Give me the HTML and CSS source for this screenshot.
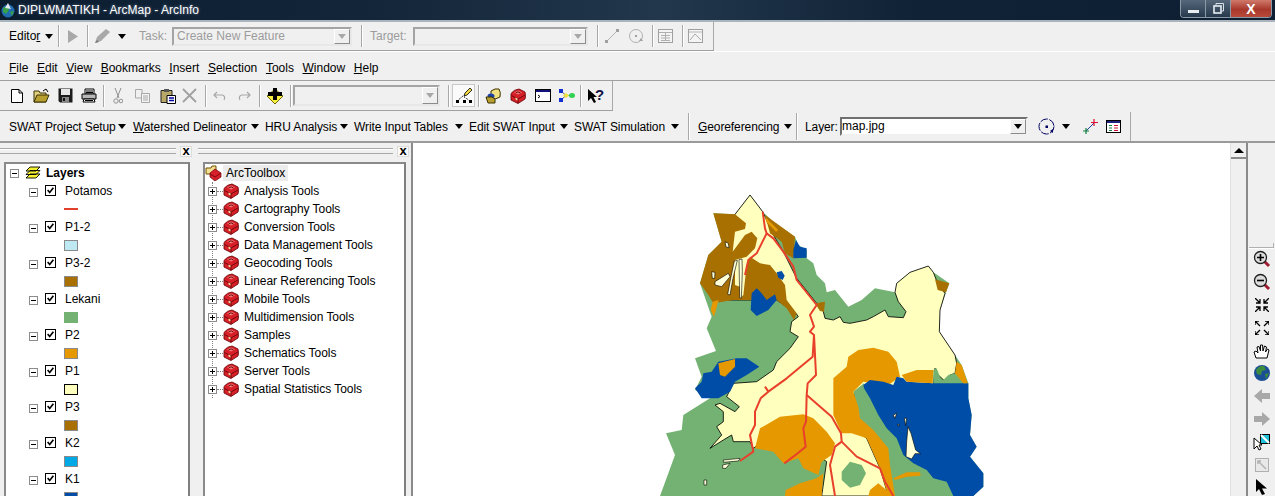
FILE: index.html
```html
<!DOCTYPE html>
<html lang="en">
<head>
<meta charset="utf-8">
<title>DIPLWMATIKH - ArcMap - ArcInfo</title>
<link rel="stylesheet" href="styles.css">
</head>
<body>
<svg class="defs" width="0" height="0" aria-hidden="true">
  <defs>
    <symbol id="i-toolbox" viewBox="0 0 16 16"><path d="M1 5.500Q4 1.500 9 1L15 4Q16 8 15 11L8 15.500 1 12Z" fill="#d81e26" stroke="#6e0a0e" stroke-width=".9"/><path d="M1.500 7.500 8 11 15 7M8 11V15" stroke="#6e0a0e" fill="none"/><path d="M4 4.500 8 2.500 12 4.500 8 6.500Z" fill="#f07a7a"/><path d="M5.500 5 8 3.800 10.500 5" fill="none" stroke="#6e0a0e"/><path d="M5.500 9.500 7.500 10.500V12.500L5.500 11.500Z" fill="#ecdca0"/></symbol>
    <symbol id="i-check" viewBox="0 0 11 11"><path d="M2 5 4.500 8 9 2" fill="none" stroke="#000" stroke-width="2"/></symbol>
    <symbol id="i-glass" viewBox="0 0 18 18"><path d="M11 11 16 16" stroke="#a01c30" stroke-width="3"/><circle cx="7.500" cy="7.500" r="6" fill="#dcdcdc" stroke="#202020" stroke-width="1.300"/></symbol>
  </defs>
</svg>

<header class="titlebar">
  <svg class="title-icon" width="16" height="16" viewBox="0 0 16 16"><circle cx="8" cy="9" r="6.500" fill="#1f6db0"/><path d="M3 6 7 4 9 8 6 12 3 10ZM10 10 14 9 12 14Z" fill="#38a048"/><path d="M8 1 11 7 5 6Z" fill="#e8e8f0"/></svg>
  <span class="title-text">DIPLWMATIKH - ArcMap - ArcInfo</span>
  <div class="winctl">
    <span class="wbtn wmin"><i class="wmin-glyph"></i></span>
    <span class="wbtn wmax"><svg width="11" height="11" viewBox="0 0 11 11"><path d="M3 2.500V.5H10.500V8H8.500" fill="none" stroke="#d8e0e6"/><rect x="1" y="3" width="7" height="7" fill="none" stroke="#e8eef2" stroke-width="1.600"/></svg></span>
    <span class="wbtn wclose">X</span>
  </div>
</header>

<section class="toolbar-row row-editor">
  <div class="tb tb-editor">
    <span class="lbl">Edito<u>r</u></span><i class="caret"></i><i class="sep"></i>
    <svg width="10" height="13" viewBox="0 0 10 13"><path d="M0 0 10 6.500 0 13Z" fill="#a8a8a8"/></svg><i class="sep"></i>
    <svg width="17" height="16" viewBox="0 0 17 16"><path d="M1 15 3 9 12 1 16 4 7 13Z" fill="#a8a8a8"/><path d="M1 15 3 12 5 14Z" fill="#777"/></svg><i class="caret"></i>
    <span class="lbl lbl-off">Task:</span>
    <div class="combo combo-task"><span class="combo-text">Create New Feature</span><span class="combo-btn"><i class="caret caret-off"></i></span></div><i class="sep"></i>
    <span class="lbl lbl-off">Target:</span>
    <div class="combo combo-target"><span class="combo-text"></span><span class="combo-btn"><i class="caret caret-off"></i></span></div><i class="sep"></i>
    <svg width="16" height="16" viewBox="0 0 16 16"><path d="M2 14 14 2" stroke="#b4b4b4"/><path d="M1 12h3v3H1zM12 1h3v3h-3z" fill="#a0a0a0"/></svg>
    <svg width="16" height="16" viewBox="0 0 16 16"><circle cx="8" cy="8" r="6.500" fill="none" stroke="#b0b0b0"/><rect x="7" y="7" width="2" height="2" fill="#a0a0a0"/><path d="M13 10 15 13 11 13Z" fill="#a0a0a0"/></svg><i class="sep"></i>
    <svg width="15" height="14" viewBox="0 0 15 14"><rect x=".5" y=".5" width="14" height="13" fill="#f4f4f4" stroke="#a0a0a0"/><path d="M1 3.500H14M3 6.500H12M3 9H12M3 11.500H12M7.500 4V12" stroke="#b0b0b0"/></svg><i class="sep"></i>
    <svg width="15" height="14" viewBox="0 0 15 14"><rect x=".5" y=".5" width="14" height="13" fill="#f4f4f4" stroke="#a0a0a0"/><path d="M2 11 7 5 13 11" fill="none" stroke="#a8a8a8"/><path d="M1 3H14" stroke="#b8b8b8"/></svg>
  </div>
</section>

<nav class="toolbar-row row-menu">
  <span><u>F</u>ile</span><span><u>E</u>dit</span><span><u>V</u>iew</span><span><u>B</u>ookmarks</span><span><u>I</u>nsert</span><span><u>S</u>election</span><span><u>T</u>ools</span><span><u>W</u>indow</span><span><u>H</u>elp</span>
</nav>

<section class="toolbar-row row-standard">
  <div class="tb tb-standard">
    <svg width="14" height="16" viewBox="0 0 14 16"><path d="M1.500 1.500H9L12.500 5V14.500H1.500Z" fill="#fff" stroke="#000"/><path d="M9 1.500V5H12.500" fill="none" stroke="#000"/></svg>
    <svg width="17" height="15" viewBox="0 0 17 15"><path d="M1 3H6L7 5H13V14H1Z" fill="#e0d080" stroke="#3a3000"/><path d="M1 14 4 7H16L13 14Z" fill="#b8a030" stroke="#3a3000"/><path d="M10 3 13 1 15 4" fill="none" stroke="#000"/></svg>
    <svg width="15" height="15" viewBox="0 0 15 15"><path d="M.5.500H14.500V14.500H2L.5 13Z" fill="#1c1c1c"/><rect x="3" y="1" width="9" height="6" fill="#e8e8e8"/><rect x="4" y="9" width="7" height="5" fill="#888"/><rect x="5" y="10" width="2" height="3" fill="#111"/></svg>
    <svg width="16" height="15" viewBox="0 0 16 15"><path d="M4 1H13V6H4Z" fill="#fff" stroke="#000"/><path d="M1 6H15V11H1Z" fill="#b8b8b8" stroke="#000"/><path d="M3 11H13L14 14H2Z" fill="#fff" stroke="#000"/><path d="M5 3H12M5 4.500H12M4 12.500H12" stroke="#000"/></svg>
    <i class="sep"></i>
    <svg width="10" height="16" viewBox="0 0 10 16"><path d="M2 0 6 10M8 0 4 10" stroke="#909090"/><circle cx="3" cy="13" r="2.200" fill="none" stroke="#909090"/><circle cx="8" cy="13" r="1.800" fill="none" stroke="#909090"/></svg>
    <svg width="15" height="14" viewBox="0 0 15 14"><path d="M.5.500H7V9H.5Z" fill="#f0f0f0" stroke="#a8a8a8"/><path d="M6.500 4.500H14.500V13.500H6.500Z" fill="#f4f4f4" stroke="#a8a8a8"/><path d="M8 7H13M8 9H13M8 11H13" stroke="#a8a8a8"/></svg>
    <svg width="17" height="16" viewBox="0 0 17 16"><path d="M1 2.500H12V14.500H1Z" fill="#b8a868" stroke="#222"/><rect x="4" y="1" width="5" height="3" fill="#555"/><path d="M7 7.500H15.500V15.500H7Z" fill="#fff" stroke="#000"/><path d="M9 10H14M9 12.500H14" stroke="#0000a0" stroke-width="1.500"/></svg>
    <svg width="15" height="15" viewBox="0 0 15 15"><path d="M1 1 14 14M14 1 1 14" stroke="#a0a0a0" stroke-width="1.800"/></svg>
    <i class="sep"></i>
    <svg width="14" height="10" viewBox="0 0 14 10"><path d="M4 1 1 4 4 7M1 4H9Q13 5 11 9" fill="none" stroke="#a8a8a8" stroke-width="1.200"/></svg>
    <svg width="14" height="10" viewBox="0 0 14 10"><path d="M10 1 13 4 10 7M13 4H5Q1 5 3 9" fill="none" stroke="#a8a8a8" stroke-width="1.200"/></svg>
    <i class="sep"></i>
    <svg width="18" height="18" viewBox="0 0 18 18"><path d="M1 9 9 2 17 9 9 17Z" fill="#f8f040" stroke="#706800"/><path d="M7 1H11V5H16V9H11V13H7V9H2V5H7Z" fill="#000"/></svg>
    <i class="sep"></i>
    <div class="combo combo-scale"><span class="combo-text"></span><span class="combo-btn"><i class="caret caret-off"></i></span></div>
    <i class="sep"></i>
    <span class="active-tool"><svg width="18" height="18" viewBox="0 0 18 18"><path d="M2 14 8 9 15 14" fill="none" stroke="#000" stroke-dasharray="1.500 1.500"/><path d="M1 13h3v3H1zM8 13h3v3H8zM14 13h3v3h-3z" fill="#000"/><path d="M9 9 10 6 15 1 17 3 12 8Z" fill="#f0d848" stroke="#000" stroke-width=".8"/></svg></span>
    <i class="sep"></i>
    <svg width="17" height="16" viewBox="0 0 17 16"><path d="M6 3Q10 0 14 1 16 4 15 9 11 12 6 10Z" fill="#f0e080" stroke="#3a3000"/><ellipse cx="6" cy="8" rx="3.500" ry="2.500" fill="#1c44a8"/><path d="M1 9 7 9 10 11 10 15 3 15Z" fill="#b8a030" stroke="#3a3000"/></svg>
    <svg width="16" height="16"><use href="#i-toolbox"/></svg>
    <svg width="16" height="13" viewBox="0 0 16 13"><rect x=".5" y=".5" width="15" height="12" fill="#fff" stroke="#000"/><rect x="1" y="1" width="14" height="2" fill="#10107c"/><path d="M3 6 5 7.500 3 9" fill="none" stroke="#000"/></svg>
    <svg width="17" height="15" viewBox="0 0 17 15"><path d="M3 3 8 7.500 3 12M8 7.500H13" stroke="#606060" fill="none"/><path d="M1 1h4v4H1zM1 10h4v4H1z" fill="#1030d0"/><path d="M5 7.500 8 5 11 7.500 8 10Z" fill="#f0e040"/><ellipse cx="14" cy="7.500" rx="3" ry="2.500" fill="#30d050"/></svg>
    <i class="sep"></i>
    <svg class="help-icon" width="17" height="16" viewBox="0 0 17 16"><path d="M1 1V13L4 10 7 15 9 14 6.500 9H10Z" fill="#000"/><text class="help-q" x="8" y="12">?</text></svg>
  </div>
</section>

<section class="toolbar-row row-swat">
  <div class="tb tb-swat">
    <span class="lbl">SWAT Project Setup</span><i class="caret"></i>
    <span class="lbl"><u>W</u>atershed Delineator</span><i class="caret"></i>
    <span class="lbl">HRU Analysis</span><i class="caret"></i>
    <span class="lbl">Write Input Tables</span><i class="caret"></i>
    <span class="lbl">Edit SWAT Input</span><i class="caret"></i>
    <span class="lbl">SWAT Simulation</span><i class="caret"></i>
    <i class="sep sep-tall"></i>
    <span class="lbl"><u>G</u>eoreferencing</span><i class="caret"></i>
    <i class="sep sep-tall"></i>
    <span class="lbl">Layer:</span>
    <div class="combo combo-layer"><span class="combo-text">map.jpg</span><span class="combo-btn"><i class="caret"></i></span></div>
    <svg width="17" height="17" viewBox="0 0 17 17"><circle cx="8.500" cy="8.500" r="7.500" fill="none" stroke="#000060" stroke-dasharray="8 1.500"/><rect x="7.500" y="7.500" width="2.500" height="2.500" fill="#000060"/><path d="M12 13 15 11 15 15Z" fill="#000060"/></svg><i class="caret"></i>
    <svg width="17" height="17" viewBox="0 0 17 17"><path d="M4 13 12 5" stroke="#2040a0"/><path d="M12 1V8M9 4.500H16" stroke="#e01030" stroke-width="1.200"/><path d="M4 10V16M1 13H7" stroke="#108040" stroke-width="1.200"/></svg>
    <svg width="15" height="13" viewBox="0 0 15 13"><rect x=".5" y=".5" width="14" height="12" fill="#fff" stroke="#000"/><rect x="1" y="1" width="13" height="2" fill="#202080"/><path d="M3 5.500H6M3 8H6M3 10.500H6" stroke="#108040"/><path d="M8 5.500H12M8 8H12M8 10.500H12" stroke="#d01030"/></svg>
  </div>
</section>

<main class="workspace">
  <aside class="dock dock-layers">
    <div class="dock-head"><span class="grip"></span><span class="dock-close">x</span></div>
    <div class="tree">
      <div class="row row-root">
        <i class="exp exp-minus"></i>
        <svg class="layers-icon" width="16" height="14" viewBox="0 0 16 14"><path d="M5 1H15L11 5H1ZM5 4.500H15L11 8.500H1ZM5 8H15L11 12H1Z" fill="#f4f030" stroke="#000" stroke-width=".9"/></svg>
        <b>Layers</b>
      </div>
      <div class="row row-layer"><i class="exp exp-minus"></i><svg class="check" width="11" height="11"><use href="#i-check"/></svg><span>Potamos</span></div>
      <div class="row row-sym"><i class="sym-line"></i></div>
      <div class="row row-layer"><i class="exp exp-minus"></i><svg class="check" width="11" height="11"><use href="#i-check"/></svg><span>P1-2</span></div>
      <div class="row row-sym"><i class="sym sym-p12"></i></div>
      <div class="row row-layer"><i class="exp exp-minus"></i><svg class="check" width="11" height="11"><use href="#i-check"/></svg><span>P3-2</span></div>
      <div class="row row-sym"><i class="sym sym-brown"></i></div>
      <div class="row row-layer"><i class="exp exp-minus"></i><svg class="check" width="11" height="11"><use href="#i-check"/></svg><span>Lekani</span></div>
      <div class="row row-sym"><i class="sym sym-green"></i></div>
      <div class="row row-layer"><i class="exp exp-minus"></i><svg class="check" width="11" height="11"><use href="#i-check"/></svg><span>P2</span></div>
      <div class="row row-sym"><i class="sym sym-orange"></i></div>
      <div class="row row-layer"><i class="exp exp-minus"></i><svg class="check" width="11" height="11"><use href="#i-check"/></svg><span>P1</span></div>
      <div class="row row-sym"><i class="sym sym-cream"></i></div>
      <div class="row row-layer"><i class="exp exp-minus"></i><svg class="check" width="11" height="11"><use href="#i-check"/></svg><span>P3</span></div>
      <div class="row row-sym"><i class="sym sym-brown"></i></div>
      <div class="row row-layer"><i class="exp exp-minus"></i><svg class="check" width="11" height="11"><use href="#i-check"/></svg><span>K2</span></div>
      <div class="row row-sym"><i class="sym sym-k2"></i></div>
      <div class="row row-layer"><i class="exp exp-minus"></i><svg class="check" width="11" height="11"><use href="#i-check"/></svg><span>K1</span></div>
      <div class="row row-sym"><i class="sym sym-k1"></i></div>
    </div>
  </aside>

  <aside class="dock dock-tools">
    <div class="dock-head"><span class="grip"></span><span class="dock-close">x</span></div>
    <div class="tree">
      <div class="row row-tbroot">
        <svg width="17" height="16" viewBox="0 0 17 16"><path d="M1 3H6L7 1H11V9H1Z" fill="#f4e090" stroke="#705000"/><path d="M5 8 10 4 16 8V12L10 16 5 12Z" fill="#d8202a" stroke="#7a0c10" stroke-width=".8"/><path d="M5 9 10 12 16 8" fill="none" stroke="#7a0c10"/></svg>
        <span class="selected">ArcToolbox</span>
      </div>
      <div class="tool-list">
        <div class="row row-tool"><i class="exp exp-plus"></i><i class="dots"></i><svg width="16" height="16"><use href="#i-toolbox"/></svg><span>Analysis Tools</span></div>
        <div class="row row-tool"><i class="exp exp-plus"></i><i class="dots"></i><svg width="16" height="16"><use href="#i-toolbox"/></svg><span>Cartography Tools</span></div>
        <div class="row row-tool"><i class="exp exp-plus"></i><i class="dots"></i><svg width="16" height="16"><use href="#i-toolbox"/></svg><span>Conversion Tools</span></div>
        <div class="row row-tool"><i class="exp exp-plus"></i><i class="dots"></i><svg width="16" height="16"><use href="#i-toolbox"/></svg><span>Data Management Tools</span></div>
        <div class="row row-tool"><i class="exp exp-plus"></i><i class="dots"></i><svg width="16" height="16"><use href="#i-toolbox"/></svg><span>Geocoding Tools</span></div>
        <div class="row row-tool"><i class="exp exp-plus"></i><i class="dots"></i><svg width="16" height="16"><use href="#i-toolbox"/></svg><span>Linear Referencing Tools</span></div>
        <div class="row row-tool"><i class="exp exp-plus"></i><i class="dots"></i><svg width="16" height="16"><use href="#i-toolbox"/></svg><span>Mobile Tools</span></div>
        <div class="row row-tool"><i class="exp exp-plus"></i><i class="dots"></i><svg width="16" height="16"><use href="#i-toolbox"/></svg><span>Multidimension Tools</span></div>
        <div class="row row-tool"><i class="exp exp-plus"></i><i class="dots"></i><svg width="16" height="16"><use href="#i-toolbox"/></svg><span>Samples</span></div>
        <div class="row row-tool"><i class="exp exp-plus"></i><i class="dots"></i><svg width="16" height="16"><use href="#i-toolbox"/></svg><span>Schematics Tools</span></div>
        <div class="row row-tool"><i class="exp exp-plus"></i><i class="dots"></i><svg width="16" height="16"><use href="#i-toolbox"/></svg><span>Server Tools</span></div>
        <div class="row row-tool"><i class="exp exp-plus"></i><i class="dots"></i><svg width="16" height="16"><use href="#i-toolbox"/></svg><span>Spatial Statistics Tools</span></div>
      </div>
    </div>
  </aside>

  <div class="map-frame">
    <div class="map">
      <svg class="map-art" width="350" height="311" viewBox="0 0 1050 933">
        <polygon class="m-green" points="330,30 368,80 400,110 465,155 475,180 500,195 500,220 520,235 530,270 555,295 560,322 585,315 625,365 665,345 705,310 765,322 770,295 810,262 865,243 880,262 928,295 918,322 900,375 898,440 945,510 965,540 985,595 985,640 995,690 990,750 1010,785 990,815 1030,865 1030,905 1000,933 60,933 105,810 78,745 125,735 130,690 210,640 165,615 185,575 165,520 228,498 200,430 215,395 180,295 205,210 245,170 220,85 285,88"/>
        <polygon class="m-cream" points="285,88 330,30 368,80 400,150 430,200 470,280 530,355 550,380 555,400 580,405 600,395 610,412 630,415 680,405 700,395 735,375 745,395 790,398 798,380 775,350 765,322 770,295 810,262 865,243 880,262 895,300 915,325 900,375 898,440 945,510 950,535 945,565 930,570 918,592 895,570 885,550 880,600 650,620 600,700 680,760 720,850 745,933 545,933 560,830 420,730 340,790 330,770 280,770 275,750 250,765 210,790 245,750 230,725 250,710 250,680 225,660 240,655 285,680 298,665 260,635 280,595 350,590 400,555 410,530 450,490 475,455 450,440 455,410 475,395 468,385 410,345 265,345 255,160"/>
        <polygon class="m-green" points="640,620 672,595 690,640 715,690 770,760 790,810 820,835 860,855 880,880 920,890 940,933 765,933 750,840 745,790 700,735 660,700 655,665"/>
        <polygon class="m-green" points="880,555 890,550 905,590 925,570 945,565 970,595 880,598"/>
        <polygon class="m-green" points="605,860 630,830 665,840 678,865 660,900 630,908 605,885"/>
        <polygon class="m-brown" points="220,85 285,88 318,115 315,132 285,140 278,200 315,150 335,140 352,160 345,190 320,215 285,225 285,300 300,305 300,340 310,330 320,240 330,215 360,235 390,240 410,265 435,300 440,345 470,385 462,405 440,370 410,345 330,345 280,345 220,355 205,330 180,295 205,210 245,170"/>
        <polygon class="m-isle" points="255,170 265,175 267,188 258,186"/>
        <polygon class="m-isle" points="215,260 225,262 224,280 217,280"/>
        <polygon class="m-isle" points="225,290 265,265 270,275 245,305 225,300"/>
        <polygon class="m-isle" points="283,228 292,226 279,280 270,330 263,328 272,280"/>
        <polygon class="m-isle" points="297,224 306,222 307,260 304,340 299,338 298,280"/>
        <polygon class="m-brown" points="375,90 465,155 462,195 460,220 435,205 425,170 390,145"/>
        <polygon class="m-orange" points="375,95 415,135 408,140 380,112"/>
        <polygon class="m-brown" points="525,355 555,350 552,380 540,378"/>
        <polygon class="m-brown" points="885,283 928,295 918,322 893,315"/>
        <polygon class="m-orange" points="218,350 236,345 222,395 212,375"/>
        <polygon class="m-blue" points="460,195 468,165 480,185 500,190 500,218 460,220"/>
        <polygon class="m-blue" points="410,262 425,258 434,272 428,285 415,278"/>
        <polygon class="m-blue" points="335,325 350,310 365,325 380,345 405,328 410,345 385,375 350,393 332,375"/>
        <polygon class="m-blue" points="165,610 185,590 190,565 215,560 235,530 290,520 320,520 358,545 320,570 285,590 270,620 235,640 185,640"/>
        <polygon class="m-orange" points="235,535 285,522 285,545 255,575 240,570"/>
        <polygon class="m-orange" points="580,580 620,545 625,515 655,495 700,488 745,500 770,530 780,575 745,600 670,590 640,620 655,665 660,700 700,735 745,790 750,840 765,933 745,933 722,860 720,850 680,760 635,745 605,745 580,690"/>
        <polygon class="m-blue" points="670,600 690,585 730,590 760,600 770,575 790,580 800,590 880,595 985,595 985,640 995,690 990,750 1010,785 990,815 1030,865 1030,905 1000,933 940,933 920,890 880,880 860,855 820,835 790,810 770,760 740,730 715,690 690,640 672,610"/>
        <polygon class="m-orange" points="785,570 830,555 880,555 878,595 800,590"/>
        <polygon class="m-orange" points="945,565 950,530 965,540 983,595 970,595"/>
        <polygon class="m-orange" points="345,790 360,730 420,695 490,688 520,700 560,740 585,775 575,810 545,830 535,870 490,850 475,820 430,835 400,800"/>
        <polygon class="m-orange" points="437,915 480,895 530,880 550,865 545,933 435,933"/>
        <polygon class="m-orange" points="690,915 715,895 745,920 750,933 685,933"/>
        <polygon class="m-orange" points="760,880 800,862 840,862 842,872 800,875 765,885"/>
        <polygon class="m-isle" points="804,725 813,745 827,795 842,806 825,806 815,822 798,815 800,770"/>
        <polygon class="m-isle" points="760,690 770,685 765,700"/>
        <polygon class="m-isle" points="793,700 800,700 797,722"/>
        <polygon class="m-isle" points="772,718 778,718 776,724"/>
        <polygon class="m-isle" points="250,825 300,820 295,828 250,832"/>
        <polygon class="m-isle" points="248,840 270,835 258,850 248,850"/>
        <polygon class="m-isle" points="192,885 200,885 200,900 192,900"/>
        <polyline class="m-river" points="368,80 375,130 380,145 400,160 430,200 460,245 470,285 530,360 510,390 522,425 510,440 522,450 518,515 440,580 385,620 362,640 345,680 345,720 330,750 340,800 300,828"/>
        <polyline class="m-river" points="375,605 385,620"/>
        <polyline class="m-river" points="380,145 365,175 350,205 325,225 315,270"/>
        <polyline class="m-river" points="522,450 528,570 503,595 500,630 498,710 490,730 497,785 460,815 433,835"/>
        <polyline class="m-river" points="500,630 575,695 603,745 605,770 585,785 570,840 585,933"/>
        <polyline class="m-river" points="605,770 650,815 720,850 735,890 760,933"/>
      </svg>
    </div>
    <div class="scrollbar"><span class="scroll-up"><i class="caret caret-up"></i></span></div>
  </div>

  <aside class="vtools">
    <i class="vgrip"></i>
    <span class="vt"><svg width="18" height="18"><use href="#i-glass"/><path d="M4 7.500H11M7.500 4V11" stroke="#000" stroke-width="1.600"/></svg></span>
    <span class="vt"><svg width="18" height="18"><use href="#i-glass"/><path d="M4 7.500H11" stroke="#000" stroke-width="1.600"/></svg></span>
    <span class="vt"><svg width="14" height="14" viewBox="0 0 14 14"><path d="M0 0 5 5M5 1V5H1M14 0 9 5M9 1V5H13M0 14 5 9M5 13V9H1M14 14 9 9M9 13V9H13" fill="none" stroke="#000" stroke-width="1.300"/></svg></span>
    <span class="vt"><svg width="14" height="14" viewBox="0 0 14 14"><path d="M5 5 0 0M0 4V0H4M9 5 14 0M14 4V0H10M5 9 0 14M0 10V14H4M9 9 14 14M14 10V14H10" fill="none" stroke="#000" stroke-width="1.300"/></svg></span>
    <span class="vt"><svg width="17" height="16" viewBox="0 0 17 16"><path d="M3 15 1 9 3 8 5 10 4 4 6 3.500 7.500 8 7.500 2 9.500 2 10 8 11.500 3 13.500 4 12.500 9 14.500 6 16 7 14 15Z" fill="#fff" stroke="#000"/></svg></span>
    <span class="vt"><svg width="16" height="16" viewBox="0 0 16 16"><circle cx="8" cy="8" r="8" fill="#1a4f96"/><path d="M2 5Q6 0 10 1L12 5 8 6 7 10 3 9ZM11 9 15 8 12 14Z" fill="#3c8c40"/></svg></span>
    <span class="vt"><svg width="16" height="14" viewBox="0 0 16 14"><path d="M8 0V4H16V10H8V14L0 7Z" fill="#a8a8a8"/></svg></span>
    <span class="vt"><svg width="16" height="14" viewBox="0 0 16 14"><path d="M8 0V4H0V10H8V14L16 7Z" fill="#a8a8a8"/></svg></span>
    <span class="vt"><svg width="18" height="18" viewBox="0 0 18 18"><rect x="7.500" y="1.500" width="9" height="9" fill="#20c0d8" stroke="#000"/><path d="M8 2 16 10" stroke="#fff" stroke-width="2"/><path d="M1 5V16L4 13 6 17 8 16 6 12H9Z" fill="#fff" stroke="#000"/></svg></span>
    <span class="vt"><svg width="14" height="14" viewBox="0 0 14 14"><rect x=".5" y=".5" width="13" height="13" fill="#e8e8e8" stroke="#b0b0b0"/><path d="M3 3 11 11M6 3H3V6" fill="none" stroke="#b0b0b0" stroke-width="1.400"/></svg></span>
    <span class="vt"><svg width="13" height="16" viewBox="0 0 13 16"><path d="M1 0V13L4 10 7 16 10 15 7 9.500H12Z" fill="#000"/></svg></span>
  </aside>
</main>
</body>
</html>
```

FILE: styles.css
```css
* { box-sizing: border-box; }
html, body { margin: 0; height: 496px; overflow: hidden; }
body {
  background: #f0f0f0;
  font: 12px/16px "Liberation Sans", Arial, sans-serif;
  color: #000;
}
i { display: block; flex: none; font-style: normal; }
.defs { position: absolute; }

/* title bar */
.titlebar {
  height: 22px;
  display: flex;
  align-items: center;
  background: linear-gradient(90deg, #0c1d30 0, #13263a 30%, #23374c 52%, #0f2236 72%, #0f1f33 100%);
  border-bottom: 2px solid #aab4bd;
  color: #fff;
}
.title-icon { flex: none; }
.title-text { margin-left: 2px; font-size: 12px; text-shadow: 0 0 3px #6a7f96; }
.winctl {
  margin-left: auto;
  margin-right: 3px;
  display: flex;
  align-self: flex-start;
  height: 18px;
  border: 1px solid #8b99a6;
  border-top: 0;
  border-radius: 0 0 4px 4px;
  overflow: hidden;
}
.wbtn { display: flex; align-items: center; justify-content: center; height: 17px; }
.wmin { width: 25px; background: linear-gradient(#56677a, #27394c); border-right: 1px solid #8b99a6; }
.wmax { width: 25px; background: linear-gradient(#56677a, #27394c); border-right: 1px solid #8b99a6; }
.wclose { width: 40px; background: linear-gradient(#d07a6c, #a8382c 55%, #b84a3a); color: #fff; font-weight: 700; font-size: 14px; }
.wmin-glyph { width: 11px; height: 3px; margin-top: 6px; background: #e8eef2; }

/* toolbars */
.toolbar-row { display: flex; background: #f0f0f0; }
.tb { display: grid; align-items: center; justify-items: start; }
.row-editor { height: 30px; border-bottom: 1px solid #fff; }
.row-menu { height: 29px; align-items: center; gap: 8.600px; padding: 3px 0 0 9px; border-bottom: 1px solid #a0a0a0; }
.row-menu span { flex: none; }
.row-standard { height: 30px; }
.row-swat { height: 30px; padding-top: 1px; }
.row-swat .lbl { letter-spacing: -.1px; }

.tb-editor {
  width: 714px; height: 29px; padding-left: 9px;
  border-right: 1px solid #a8a8a8; border-bottom: 1px solid #a0a0a0;
  grid-template-columns: 36px 13px 10px 19px 7px 24px 21px 33px 189px 9px 43px 184px 7px 24px 24px 6px 24px 6px 25px;
}
.tb-standard {
  width: 613px; height: 30px; padding-left: 10px;
  border-right: 1px solid #a8a8a8; border-bottom: 1px solid #a0a0a0;
  grid-template-columns: 23px 25px 23px 22px 10px 22px 25px 22px 23px 8px 24px 22px 7px 24px 3px 155px 5px 25px 7px 25px 25px 23px 22px 7px 25px;
}
.tb-swat {
  width: 1131px; height: 29px; padding-left: 9px;
  border-right: 1px solid #a8a8a8;
  grid-template-columns: 109px 15px 118px 14px 75px 14px 101px 14px 91px 14px 97px 17px 10px 86px 12px 9px 35px 198px 24px 20px 24px 24px;
}
.lbl { white-space: nowrap; }
.lbl-off { color: #9c9c9c; }
.caret { width: 0; height: 0; border-style: solid; border-width: 5px 4.500px 0; border-color: #000 transparent transparent; }
.caret-off { border-top-color: #a8a8a8; }
.caret-up { border-width: 0 5px 5px; border-color: transparent transparent #000; }
.sep { width: 1px; height: 22px; background: #a8a8a8; box-shadow: 1px 0 0 #fff; }
.sep-tall { height: 27px; }

.combo {
  display: flex;
  height: 19px;
  background: #f0f0f0;
  border: 2px solid;
  border-color: #a4a4a4 #e8e8e8 #e8e8e8 #a4a4a4;
}
.combo-task { width: 180px; }
.combo-target { width: 175px; }
.combo-scale { width: 147px; height: 21px; }
.combo-layer { width: 188px; height: 19px; background: #fff; border-color: #707070 #f0f0f0 #f0f0f0 #707070; }
.combo-text { flex: 1; padding-left: 3px; line-height: 14px; color: #9c9c9c; white-space: nowrap; overflow: hidden; }
.combo-layer .combo-text { color: #000; padding-left: 0; }
.combo-btn {
  flex: none; width: 16px; display: flex; align-items: center; justify-content: center;
  background: #f0f0f0;
  border: 1px solid; border-color: #fff #8c8c8c #8c8c8c #fff;
}
.active-tool { display: flex; align-items: center; justify-content: center; width: 23px; height: 23px; margin-left: -1px; background: #fafafa; border: 1px solid #c8c8c8; }
.help-icon { overflow: visible; }
.help-q { font: 700 15px "Liberation Sans", sans-serif; fill: #101040; }

/* workspace */
.workspace { display: flex; height: 355px; border-top: 2px solid #9a9a9a; }
.dock { flex: none; display: flex; flex-direction: column; }
.dock-layers { width: 193px; padding: 0 3px 0 4px; }
.dock-tools { width: 218px; padding: 0 5px 0 10px; }
.dock-head { flex: none; height: 19px; display: flex; align-items: center; gap: 4px; }
.dock-layers .dock-head { margin: 0 -3px 0 -4px; padding-right: 1px; }
.dock-tools .dock-head { margin: 0 -3px 0 -5px; }
.grip { flex: 1; height: 6px; margin-top: -3px; border-top: 1px solid #a8a8a8; border-bottom: 1px solid #a8a8a8; box-shadow: inset 0 1px 0 #fff; }
.dock-close {
  flex: none; width: 12px; height: 11px; margin-top: -2px;
  display: flex; align-items: center; justify-content: center;
  background: #fafafa; border: 1px solid #dcdcdc;
  font: 700 13px/8px "Liberation Sans", sans-serif;
  padding-bottom: 2px;
}
.tree {
  flex: 1; min-height: 0; overflow: hidden;
  background: #fff;
  border: 2px solid; border-color: #8a8a8a #808080 #8a8a8a #8a8a8a;
  border-bottom: 0;
}
.row { height: 18px; display: flex; align-items: center; white-space: nowrap; flex: none; }
.exp {
  width: 9px; height: 9px; border: 1px solid #8c8c8c; background-color: #fff;
  background-repeat: no-repeat; background-position: center;
}
.exp-minus { background-image: linear-gradient(#000, #000); background-size: 5px 1px; }
.exp-plus { background-image: linear-gradient(#000, #000), linear-gradient(#000, #000); background-size: 5px 1px, 1px 5px; }
.row-root { padding-left: 4px; }
.row-root .exp { margin-right: 6px; }
.layers-icon { margin-right: 5px; flex: none; }
.row-layer { padding-left: 23px; }
.row-layer .exp { margin-top: 2px; }
.check { flex: none; margin: -2px 9px 0 7px; border: 1px solid #000; background: #fff; }
.row-sym { padding-left: 58px; }
.sym { width: 14px; height: 11px; border: 1px solid #8a8a8a; }
.sym-line { width: 14px; height: 2px; background: #e0402c; }
.sym-p12 { background: #bee8f2; }
.sym-brown { background: #a87000; }
.sym-green { background: #73b273; border-color: #73b273; }
.sym-orange { background: #e69800; }
.sym-cream { background: #ffffbe; border-color: #000; }
.sym-k2 { background: #00a9e6; }
.sym-k1 { background: #004da8; }

.row-tbroot svg { flex: none; margin-right: 1px; }
.selected { padding: 0 3px; background: #ececec; }
.tool-list { margin-left: 7px; border-left: 1px dotted #808080; }
.row-tool .exp { margin-left: -5px; }
.row-tool svg { flex: none; }
.dots { width: 6px; height: 1px; border-top: 1px dotted #808080; }
.row-tool span { margin-left: 5px; letter-spacing: -.05px; }

.map-frame { flex: 1; display: flex; border-left: 2px solid #8a8a8a; border-right: 2px solid #8a8a8a; background: #fff; min-width: 0; }
.map { flex: 1; position: relative; overflow: hidden; }
.map-art { position: absolute; left: 227px; top: 42px; }
.m-green { fill: #73b273; }
.m-cream { fill: #ffffbe; stroke: #000; stroke-width: 2.500; stroke-linejoin: round; }
.m-isle { fill: #ffffd8; stroke: #000; stroke-width: 1.800; stroke-linejoin: round; }
.m-brown { fill: #a87000; }
.m-orange { fill: #e69800; }
.m-blue { fill: #004da8; }
.m-river { fill: none; stroke: #e8402a; stroke-width: 6; stroke-linejoin: round; }

.scrollbar { flex: none; width: 16px; background: #f0f0f0; border-left: 1px solid #e0e0e0; }
.scroll-up { display: flex; align-items: center; justify-content: center; height: 16px; background: #f0f0f0; border-bottom: 2px solid #8a8a8a; }

.vtools { flex: none; width: 27px; padding-top: 100px; display: flex; flex-direction: column; align-items: center; }
.vgrip { width: 25px; height: 5px; border-bottom: 1px solid #b0b0b0; border-right: 1px solid #b0b0b0; box-shadow: 0 1px 0 #fff; }
.vt { flex: none; height: 22.800px; display: flex; align-items: center; justify-content: center; }
```
